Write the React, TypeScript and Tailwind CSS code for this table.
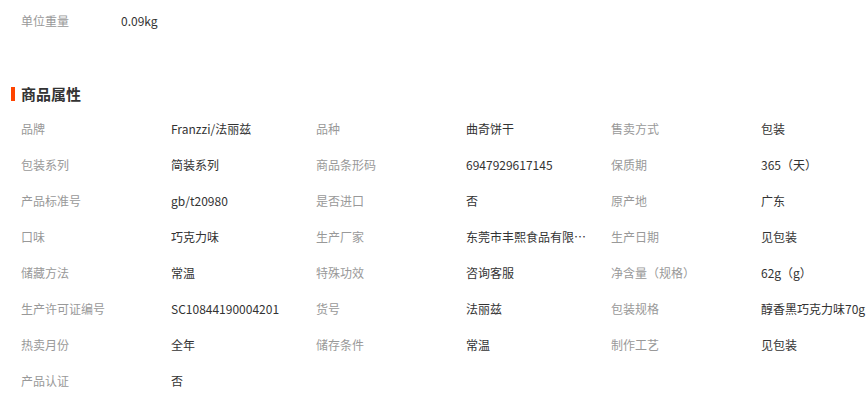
import React from "react";

const rows: [string, string, string, string, string, string][] = [
  ["品牌", "Franzzi/法丽兹", "品种", "曲奇饼干", "售卖方式", "包装"],
  ["包装系列", "简装系列", "商品条形码", "6947929617145", "保质期", "365（天）"],
  ["产品标准号", "gb/t20980", "是否进口", "否", "原产地", "广东"],
  ["口味", "巧克力味", "生产厂家", "东莞市丰熙食品有限公司", "生产日期", "见包装"],
  ["储藏方法", "常温", "特殊功效", "咨询客服", "净含量（规格）", "62g（g）"],
  ["生产许可证编号", "SC10844190004201", "货号", "法丽兹", "包装规格", "醇香黑巧克力味70g"],
  ["热卖月份", "全年", "储存条件", "常温", "制作工艺", "见包装"],
];

function Label({ t }: { t: string }) {
  return <div className="w-[150px] shrink-0 text-[#999999] whitespace-nowrap">{t}</div>;
}
function Value({ t }: { t: string }) {
  return (
    <div className="w-[145px] shrink-0">
      <div className="max-w-[122px] truncate text-[#333333]">{t}</div>
    </div>
  );
}

export default function App() {
  return (
    <div
      className="w-[866px] h-[393px] overflow-hidden bg-white text-[12px]"
      style={{ fontFamily: '"Noto Sans CJK SC", "Noto Sans", sans-serif' }}
    >
      <div className="mt-[3px] flex h-9 items-center pl-[21px]">
        <div className="w-[100px] text-[#999999]">单位重量</div>
        <div className="text-[#333333]">0.09kg</div>
      </div>
      <div className="mt-[37px] flex h-9 items-center">
        <div className="ml-[11px] h-[14px] w-[4px] bg-[#ff4400]" />
        <div className="ml-[6px] text-[15px] font-bold text-[#333333]">商品属性</div>
      </div>
      <div className="mt-[-1px] flex flex-col pl-[21px]">
        {rows.map((r, i) => (
          <div key={i} className="flex h-9 items-center">
            <Label t={r[0]} />
            <Value t={r[1]} />
            <Label t={r[2]} />
            <Value t={r[3]} />
            <Label t={r[4]} />
            <div className="w-[150px] shrink-0 whitespace-nowrap text-[#333333]">{r[5]}</div>
          </div>
        ))}
        <div className="flex h-9 items-center">
          <Label t="产品认证" />
          <Value t="否" />
        </div>
      </div>
    </div>
  );
}
